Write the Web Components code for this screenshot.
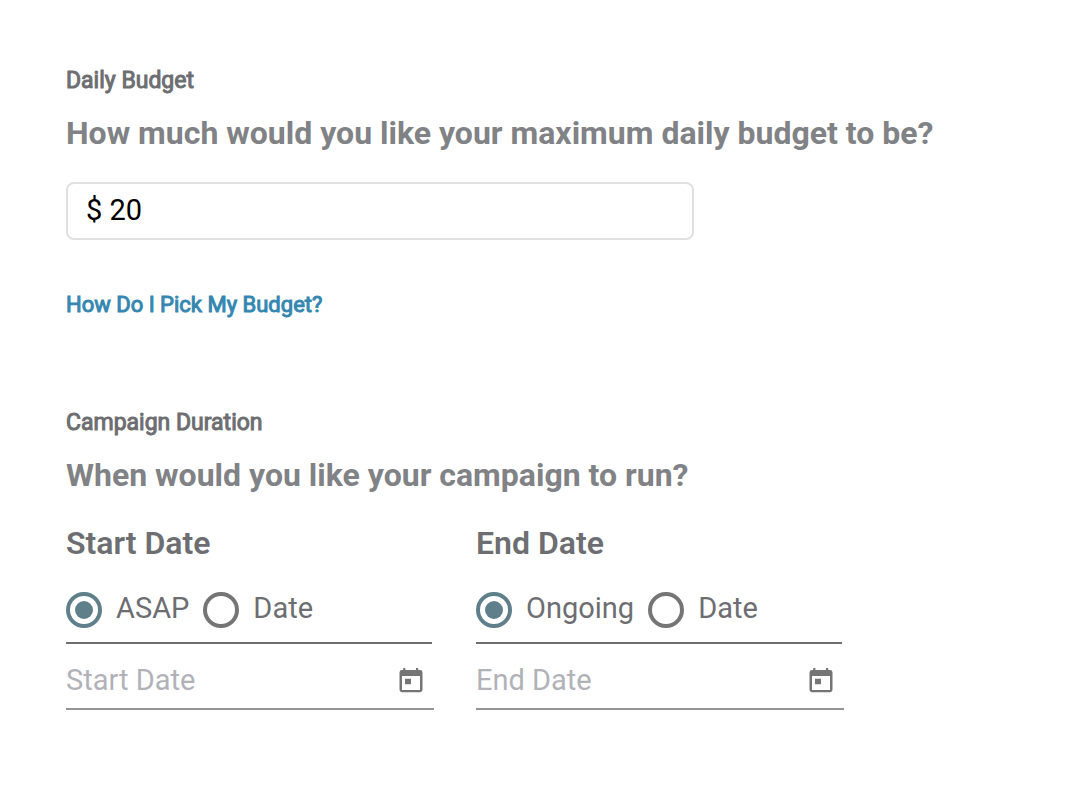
<!DOCTYPE html>
<html lang="en">
<head>
<meta charset="utf-8">
<meta name="viewport" content="width=device-width, initial-scale=1">
<title>Campaign settings</title>
<style>
  body { margin: 0; background: #fff; color: #6d6e71; font-family: Roboto, "Liberation Sans", sans-serif; }
</style>
</head>
<body>
<campaign-form></campaign-form>
<script>
  const define = (name, html, setup) => {
    const template = document.createElement('template');
    template.innerHTML = html;
    customElements.define(name, class extends HTMLElement {
      constructor() {
        super();
        this.attachShadow({ mode: 'open' }).append(template.content.cloneNode(true));
      }
      connectedCallback() { if (setup) setup(this, this.shadowRoot); }
    });
  };

  define('form-section', `
    <style>
      :host { display: block; }
      h2 { margin: 0 0 16px; font-size: 23px; line-height: 28px; font-weight: 400; -webkit-text-stroke: 1px; color: #6d6e71; }
      p { margin: 0 0 27px; font-size: 32px; line-height: 44px; font-weight: 700; color: #808285; }
    </style>
    <h2><slot name="title"></slot></h2>
    <p><slot name="question"></slot></p>
    <slot></slot>`);

  define('budget-input', `
    <style>
      :host { display: block; max-width: 628px; }
      input { box-sizing: border-box; display: block; width: 100%; height: 58px; padding: 0 18px 2px; border: 2px solid #e0e0e0; border-radius: 8px; font: 400 29px Roboto, sans-serif; color: #000; background: #fff; outline: none; }
    </style>
    <input type="text" value="$ 20" aria-label="Maximum daily budget">`);

  define('help-link', `
    <style>
      :host { display: block; }
      a { font-size: 22px; line-height: 28px; font-weight: 400; -webkit-text-stroke: 1px; color: #3587b1; text-decoration: none; }
    </style>
    <a href="#budget-help"><slot></slot></a>`);

  define('radio-option', `
    <style>
      :host { display: block; }
      label { display: flex; align-items: center; gap: 14px; font-size: 29px; line-height: 36px; }
      input { appearance: none; flex: none; box-sizing: border-box; width: 36px; height: 36px; margin: 0; padding: 5px; border: 4px solid #757575; border-radius: 50%; }
      input:checked { border-color: #5f7f8a; background: #5f7f8a content-box; }
      span { padding-bottom: 4px; }
    </style>
    <label><input type="radio" name="choice"><span><slot></slot></span></label>`,
    (host, root) => {
      const input = root.querySelector('input');
      input.checked = host.hasAttribute('checked');
      input.addEventListener('change', () => {
        for (const other of host.parentElement.querySelectorAll('radio-option')) {
          if (other !== host) other.shadowRoot.querySelector('input').checked = false;
        }
      });
    });

  define('date-field', `
    <style>
      :host { display: flex; align-items: center; box-sizing: border-box; height: 66px; padding: 8px 10px 0 0; border-bottom: 2px solid #949494; }
      input { flex: 1; min-width: 0; padding: 0; border: 0; outline: none; background: none; font: 400 29px Roboto, sans-serif; color: #6d6e71; }
      input::placeholder { color: #b1b2b8; opacity: 1; }
      button { display: flex; padding: 0; border: 0; background: none; color: #757575; }
    </style>
    <input type="text">
    <button type="button" aria-label="Open calendar">
      <svg width="26" height="26" viewBox="0 0 26 26" fill="currentColor"><path fill-rule="evenodd" d="M4 3H5.2V1H7.4V3H18V1H20.2V3H22Q24.5 3 24.5 5.4V22.8Q24.5 25.2 22 25.2H4Q1.5 25.2 1.5 22.8V5.4Q1.5 3 4 3ZM4 9V23H22V9ZM7 11.8H13V17.2H7Z"/></svg>
    </button>`,
    (host, root) => {
      const input = root.querySelector('input');
      input.placeholder = host.getAttribute('label');
      input.setAttribute('aria-label', host.getAttribute('label'));
    });

  define('date-choice', `
    <style>
      :host { display: block; min-width: 0; }
      h3 { margin: 0 0 28px; font-size: 32px; line-height: 38px; font-weight: 600; color: #6d6e71; }
      .options { display: flex; gap: 14px; margin-right: 2px; padding-bottom: 12px; border-bottom: 2px solid #6d6e71; }
    </style>
    <h3><slot name="title"></slot></h3>
    <div class="options" role="radiogroup"><slot></slot></div>
    <slot name="field"></slot>`);

  define('campaign-form', `
    <style>
      :host { display: block; padding: 67px 66px 96px; }
      help-link { margin: 51px 0 90px; }
      .dates { display: grid; grid-template-columns: repeat(2, minmax(0, 368px)); gap: 42px; }
    </style>
    <form-section>
      <span slot="title">Daily Budget</span>
      <span slot="question">How much would you like your maximum daily budget to be?</span>
      <budget-input></budget-input>
      <help-link>How Do I Pick My Budget?</help-link>
    </form-section>
    <form-section>
      <span slot="title">Campaign Duration</span>
      <span slot="question">When would you like your campaign to run?</span>
      <div class="dates">
        <date-choice>
          <span slot="title">Start Date</span>
          <radio-option checked>ASAP</radio-option>
          <radio-option>Date</radio-option>
          <date-field slot="field" label="Start Date"></date-field>
        </date-choice>
        <date-choice>
          <span slot="title">End Date</span>
          <radio-option checked>Ongoing</radio-option>
          <radio-option>Date</radio-option>
          <date-field slot="field" label="End Date"></date-field>
        </date-choice>
      </div>
    </form-section>`);
</script>
</body>
</html>
